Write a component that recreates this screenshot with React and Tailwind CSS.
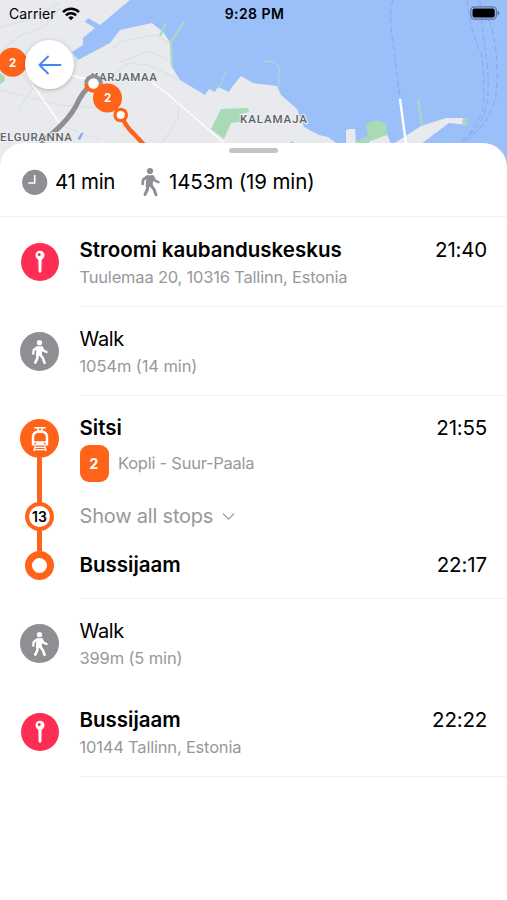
import { ChevronDown } from 'lucide-react';

function WalkIcon({ className }) {
  return (
    <svg viewBox="0 0 20 30" fill="none" stroke="currentColor" strokeLinecap="round" strokeLinejoin="round" className={className}>
      <circle cx="10" cy="4" r="3.1" fill="currentColor" stroke="none" />
      <path d="M7.2 9h5.6l.4 4-1.2 3 .2 3-5.8.4.4-6z" fill="currentColor" strokeWidth="1.4" />
      <path d="M7.2 9.6 3.2 12.6 2.6 17M12.8 9.6l1.9 3.8 3.6 1.7" strokeWidth="2.7" />
      <path d="M7.8 18.3 7.4 22.5 5 27.5M11 18.3l3 4 2 5.5" strokeWidth="3" />
    </svg>
  );
}

function PinIcon() {
  return (
    <svg viewBox="0 0 12 24" className="h-6 w-3">
      <path d="M4.3 8h3.4l-.3 13.3a1.4 1.4 0 0 1-2.8 0z" fill="#fff" />
      <circle cx="6" cy="5.2" r="4.5" fill="#fff" />
      <circle cx="5.2" cy="4.4" r="1.5" fill="#fe2d55" />
    </svg>
  );
}

function TramIcon() {
  return (
    <svg viewBox="0 0 18 26" fill="none" stroke="#fff" className="h-[26px] w-[18px]">
      <path d="M3.3 1.7h11.4M6.3 2l1.2 3h3l1.2-3" strokeWidth="1.4" />
      <path d="M.8 19.5V11c0-3.8 2.6-6.2 5.4-6.2h5.6c2.8 0 5.4 2.4 5.4 6.2v8.5z" fill="#fff" stroke="none" />
      <path d="M3.2 15.3v-4c0-2.6 1.2-4.3 3.6-4.3h4.4c2.4 0 3.6 1.7 3.6 4.3v4z" fill="#ff6319" stroke="none" />
      <circle cx="4.3" cy="17.4" r=".9" fill="#ff6319" stroke="none" />
      <circle cx="13.7" cy="17.4" r=".9" fill="#ff6319" stroke="none" />
      <path d="M4.3 20 2.8 25M13.7 20l1.5 5M4.5 21.3h9M3.7 23.6h10.6" strokeWidth="1.3" />
    </svg>
  );
}

function ClockIcon() {
  return (
    <svg viewBox="0 0 26 26" className="h-[26px] w-[26px]">
      <circle cx="12.7" cy="13.3" r="12.6" fill="#8e8e93" />
      <path d="M12.7 6V14H6.2" fill="none" stroke="#fff" strokeWidth="1.6" />
    </svg>
  );
}

function MapView() {
  return (
    <svg viewBox="0 0 507 170" className="block h-[170px] w-full">
      <rect width="507" height="170" fill="#e8eaed" />
      <g fill="none" stroke="#dcdfe3" strokeWidth="1.2">
        <path d="M0 52 20 36 45 26 60 8M0 27l28-7 32-17M112 49l8-7 35-7 15 9M118 63l30-12 22 10 20 13M100 85l28-22 20 2 30 14M35 85 18 110M60 125l40 15M158 150l20-32 1-15M0 90l60 15 70 5" />
      </g>
      <path d="M130 0 100 25 88 18 85 22 95 28 83 38V45L72 52 78 60 110 43 120 30 152 23 163 32 170 42 172 67 180 80 205 95 209 89 215 92 218 87 229 92 232 87 241 76 253 83 277 86 281 95 297 109 304 127 319 135 328 137 340 146 350 170H507V0Z" fill="#9bbff9" />
      <path d="M346 144V130l3-1h6l1 15zM369 141l18-7 4 10h-22zM393 144 421 126 446 118 467 118 467 125 449 123 421 144z" fill="#e8eaed" />
      <path d="M366 125q8-8 20-2l1 12-17 6-6 3h-9l1-3 12-5z" fill="#a8dab5" />
      <path d="m221 109 27-1 1 4-9 2v8l-9 1-7 16-13-10zM463 118h4v8l-5-2zM0 73l5 4-1 5-4 2zM288 144l4-3 3 3z" fill="#a8dab5" />
      <g fill="none" stroke="#a8d8c6">
        <path d="m184 22-13 20 1 24M160 36l6-13" strokeWidth="2.4" />
        <path d="m418 99 4 27" strokeWidth="2.4" />
        <path d="M264 61.5h8q7 3 7 8v17M226 72l-7 16" strokeWidth="1.3" />
      </g>
      <g fill="none" stroke="#fff">
        <path d="m400 99 6 45" strokeWidth="2.4" />
        <path d="M20 66 60 124M70 75l20 5M145 77l25 19 55 48" strokeWidth="1.4" />
      </g>
      <g fill="none" stroke="#82a9f4" strokeWidth="1" strokeDasharray="6 3">
        <path d="M393 0q-5 16 1 49l6 49M467 0q4 36 15 54 3 36 1 54-5 18-23 36M480 0q2 30 7 62 5 48-10 65l-16 17M489 20q11 30 7 75-4 20-16 33l-17 16" />
      </g>
      <path d="m78 139 3-5 2-1-3 6z" fill="#82a9f4" stroke="#82a9f4" />
      <path d="M91 85Q82 92 76 106 69 119 53 133L40 143" fill="none" stroke="#8e8f93" strokeWidth="5" />
      <g fontFamily="Roboto, 'Liberation Sans', sans-serif" fontSize="11.5" fill="#5f6368" stroke="#eef0f2" strokeWidth="2" paintOrder="stroke" fontWeight="500">
        <text x="91" y="81" textLength="66">KARJAMAA</text>
        <text x="0" y="140.5" textLength="72">ELGURANNA</text>
        <text x="240" y="122.5" textLength="67">KALAMAJA</text>
      </g>
      <path d="M121 115Q126 127 134 134L148 149" fill="none" stroke="#ff6319" strokeWidth="4.5" />
      <path d="M84.2 83.5a9.3 9.3 0 0 0 18.6 0" fill="#ff6319" />
      <path d="M84.2 83.5a9.3 9.3 0 0 1 18.6 0z" fill="#8e8f93" />
      <circle cx="93.5" cy="83.5" r="5.3" fill="#fff" />
      <circle cx="107.5" cy="98" r="14.5" fill="#ff6319" />
      <circle cx="12.5" cy="62.3" r="14.5" fill="#ff6319" />
      <circle cx="120.7" cy="115" r="5.7" fill="#fff" stroke="#ff6319" strokeWidth="3.3" />
      <g fontFamily="Inter, sans-serif" fontSize="11.5" fontWeight="700" fill="#fff" textAnchor="middle">
        <text x="107.5" y="102.3">2</text>
        <text x="12.5" y="66.5">2</text>
      </g>
    </svg>
  );
}

function StatusBar() {
  return (
    <div className="absolute inset-x-0 top-0 grid h-7 grid-cols-3 items-center pr-[7px] pl-[9px] text-[14px] leading-none text-black">
      <div className="flex items-center gap-[6px]">
        <span className="tracking-[0.1px]">Carrier</span>
        <svg viewBox="0 0 18 14" className="h-[14px] w-[18px]">
          <path d="M9 13.3 6.3 10.6a3.9 3.9 0 0 1 5.4 0z" />
          <path d="M1 5.1a11.5 11.5 0 0 1 16 0M3.9 8.3a7.3 7.3 0 0 1 10.2 0" fill="none" stroke="#000" strokeWidth="2.5" />
        </svg>
      </div>
      <span className="text-center font-semibold tracking-[0.45px] whitespace-nowrap">9:28 PM</span>
      <svg viewBox="0 0 30 14" className="-mt-[2px] h-[14px] w-[30px] justify-self-end">
        <rect x=".8" y=".8" width="25.6" height="12.4" rx="3.6" fill="none" stroke="#5f769b" strokeWidth="1.2" />
        <rect x="2.5" y="2.4" width="22.2" height="9.2" rx="2" />
        <path d="M27.5 4.7q2 .6 2 2.3t-2 2.3z" fill="#5f769b" />
      </svg>
    </div>
  );
}

function StepIcon({ type }) {
  if (type === 'walk') {
    return (
      <div className="flex h-[39px] w-[39px] items-center justify-center rounded-full bg-[#8e8e93] text-white">
        <WalkIcon className="h-[26px] w-[17px]" />
      </div>
    );
  }

  return (
    <div className="flex h-[38px] w-[38px] items-center justify-center rounded-full bg-[#fe2d55]">
      <PinIcon />
    </div>
  );
}

function Step({ type, title, titleClass, detail, detailClass, time, className }) {
  return (
    <div className={`flex ${className}`}>
      <div className="flex w-[79px] shrink-0 justify-center pt-[26px]">
        <StepIcon type={type} />
      </div>
      <div className="ml-[0.5px] flex flex-1 justify-between border-b border-inherit pt-[19px] pr-5">
        <div className="whitespace-nowrap">
          <p className={`leading-7 text-black ${titleClass}`}>{title}</p>
          <p className={`text-[16.5px] leading-[26px] text-[#98989b] ${detailClass}`}>{detail}</p>
        </div>
        {time && <span className="text-[20.5px] leading-7 tracking-[-0.2px]">{time}</span>}
      </div>
    </div>
  );
}

function TramStep() {
  return (
    <div className="flex h-[203px] border-[#f2f2f3]">
      <div className="flex w-[79px] shrink-0 flex-col items-center pt-[23px]">
        <div className="flex h-[39px] w-[39px] shrink-0 items-center justify-center rounded-full bg-[#ff6319]">
          <TramIcon />
        </div>
        <div className="h-[44px] w-[5px] shrink-0 bg-[#ff6319]" />
        <div className="flex h-[29px] w-[29px] shrink-0 items-center justify-center rounded-full border-[4.5px] border-[#ff6319] bg-white text-[14px] font-semibold">
          13
        </div>
        <div className="h-[20px] w-[5px] shrink-0 bg-[#ff6319]" />
        <div className="h-[29px] w-[29px] shrink-0 rounded-full border-[7px] border-[#ff6319] bg-white" />
      </div>
      <div className="ml-[0.5px] flex-1 border-b border-inherit pt-[18px] pr-5">
        <div className="flex justify-between text-[20.5px] leading-7">
          <span className="font-semibold">Sitsi</span>
          <span className="tracking-[-0.2px]">21:55</span>
        </div>
        <div className="mt-[3px] flex items-center gap-[9px]">
          <span className="flex h-[37px] w-[29px] items-center justify-center rounded-[9px] bg-[#ff6319] text-[14px] font-bold text-white">
            2
          </span>
          <span className="ml-[0.5px] text-[16.5px] tracking-[-0.25px] text-[#98989b]">Kopli - Suur-Paala</span>
        </div>
        <div className="mt-[20px] flex items-center gap-[5px] text-[20px] leading-7 text-[#98989b]">
          <span className="tracking-[-0.2px]">Show all stops</span>
          <ChevronDown className="h-[21px] w-[21px]" strokeWidth={1.5} />
        </div>
        <div className="mt-[21px] flex justify-between text-[20.5px] leading-7">
          <span className="font-semibold">Bussijaam</span>
          <span className="tracking-[-0.1px]">22:17</span>
        </div>
      </div>
    </div>
  );
}

export default function App() {
  return (
    <div className="relative h-[900px] w-[507px] overflow-hidden bg-white font-['Inter','Liberation_Sans',sans-serif] text-black">
      <MapView />
      <StatusBar />
      <button className="absolute top-[40px] left-[25px] flex h-[49px] w-[49px] items-center justify-center rounded-full bg-white shadow-[0_1px_4px_rgba(0,0,0,0.25)]">
        <svg viewBox="0 0 24 20" fill="none" stroke="#4285f4" strokeWidth="1.9" strokeLinecap="round" strokeLinejoin="round" className="h-5 w-6">
          <path d="M22.5 10h-21M10 1.5 1.5 10l8.5 8.5" />
        </svg>
      </button>

      <main className="relative -mt-[27px] h-[757px] rounded-t-[24px] bg-white">
        <div className="flex justify-center pt-[5px]">
          <div className="h-[5px] w-[49px] rounded-full bg-[#c4c4c7]" />
        </div>
        <header className="flex h-[64px] items-center border-b border-[#f2f2f3] pb-[5px] pl-[22px] text-[20.5px] whitespace-nowrap">
          <ClockIcon />
          <span className="ml-[7px] w-[61px] tracking-[-0.3px]">41 min</span>
          <WalkIcon className="ml-[24px] h-[30px] w-[20px] text-[#8e8e93]" />
          <span className="ml-[9px] tracking-[-0.12px]">1453m (19 min)</span>
        </header>

        <Step
          type="pin"
          title="Stroomi kaubanduskeskus"
          titleClass="text-[20.5px] font-semibold"
          detail="Tuulemaa 20, 10316 Tallinn, Estonia"
          detailClass="tracking-[-0.2px]"
          time="21:40"
          className="h-[90px] border-[#f2f2f3]"
        />
        <Step
          type="walk"
          title="Walk"
          titleClass="text-[20px] tracking-[-0.3px]"
          detail="1054m (14 min)"
          detailClass="tracking-[-0.1px]"
          className="-mt-px h-[90px] border-[#f2f2f3]"
        />
        <TramStep />
        <Step
          type="walk"
          title="Walk"
          titleClass="text-[20px] tracking-[-0.3px]"
          detail="399m (5 min)"
          detailClass="tracking-[-0.15px]"
          className="-mt-px h-[89px] border-transparent"
        />
        <Step
          type="pin"
          title="Bussijaam"
          titleClass="text-[20.5px] font-semibold"
          detail="10144 Tallinn, Estonia"
          detailClass="tracking-[-0.2px]"
          time="22:22"
          className="h-[90px] border-[#f2f2f3]"
        />
      </main>
    </div>
  );
}
